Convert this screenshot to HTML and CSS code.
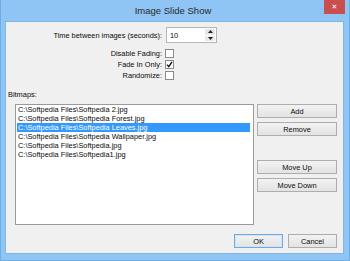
FILE: index.html
```html
<!DOCTYPE html>
<html lang="en">
<head>
    <meta charset="UTF-8">
    <title>Image Slide Show</title>
    <link rel="stylesheet" href="styles.css">
</head>
<body>
    <div class="window">
        <div class="titlebar">
            <div class="title">Image Slide Show</div>
            <div class="caption-close"><span class="caption-x">✕</span></div>
        </div>

        <div class="client">
            <div class="row spin-row">
                <span class="lbl">Time between images (seconds):</span>
                <div class="spin">
                    <span class="spin-value">10</span>
                    <div class="spin-btns">
                        <span class="spin-btn"><svg width="5" height="3" viewBox="0 0 5 3"><path d="M0 3 L2.5 0 L5 3 Z" fill="#222"/></svg></span>
                        <span class="spin-btn"><svg width="5" height="3" viewBox="0 0 5 3"><path d="M0 0 L2.5 3 L5 0 Z" fill="#222"/></svg></span>
                    </div>
                </div>
            </div>

            <div class="checks">
                <div class="row check-row">
                    <span class="lbl">Disable Fading:</span>
                    <span class="box"></span>
                </div>
                <div class="row check-row">
                    <span class="lbl">Fade In Only:</span>
                    <span class="box">
                        <svg width="7" height="7" viewBox="0 0 7 7">
                            <path d="M1 3.6 L2.8 5.6 L6 0.8" fill="none" stroke="#111" stroke-width="1.4"/>
                        </svg>
                    </span>
                </div>
                <div class="row check-row">
                    <span class="lbl">Randomize:</span>
                    <span class="box"></span>
                </div>
            </div>

            <div class="section-label">Bitmaps:</div>

            <div class="list-area">
                <ul class="list">
                    <li>C:\Softpedia Files\Softpedia 2.jpg</li>
                    <li>C:\Softpedia Files\Softpedia Forest.jpg</li>
                    <li class="selected">C:\Softpedia Files\Softpedia Leaves.jpg</li>
                    <li>C:\Softpedia Files\Softpedia Wallpaper.jpg</li>
                    <li>C:\Softpedia Files\Softpedia.jpg</li>
                    <li>C:\Softpedia Files\Softpedia1.jpg</li>
                </ul>
                <div class="side-buttons">
                    <button class="btn">Add</button>
                    <button class="btn">Remove</button>
                    <button class="btn btn-up">Move Up</button>
                    <button class="btn">Move Down</button>
                </div>
            </div>

            <div class="footer">
                <button class="btn btn-small btn-default">OK</button>
                <button class="btn btn-small">Cancel</button>
            </div>
        </div>
    </div>
</body>
</html>
```

FILE: styles.css
```css
body {
    margin: 0;
    padding: 0;
    font-family: 'Liberation Sans', Arial, sans-serif;
    font-size: 7.4px;
    color: #0a0a0a;
}

.window {
    width: 350px;
    height: 261px;
    box-sizing: border-box;
    background-color: #8fc5f4;
    border: 1px solid #6eaee6;
    border-top: none;
    display: flex;
    flex-direction: column;
}

.titlebar {
    height: 21px;
    display: grid;
    grid-template-columns: 21px 1fr 21px;
    padding: 0 4px 0 0;
}

.title {
    grid-column: 2;
    text-align: center;
    font-size: 9.5px;
    line-height: 21px;
    color: #2a2a2a;
}

.caption-close {
    grid-column: 3;
    height: 14px;
    background-color: rgb(201, 79, 79);
    color: #fff;
    font-size: 7px;
    line-height: 14px;
    text-align: center;
    font-family: 'DejaVu Sans', sans-serif;
    font-weight: bold;
}

.client {
    margin: 0 5px 6px 4px;
    flex: 1;
    background-color: #f0f0f0;
    border: 1px solid #82b6e4;
    padding: 5px 6px 5px 0;
    display: flex;
    flex-direction: column;
}

.row {
    display: flex;
    align-items: center;
}

.lbl {
    width: 156px;
    text-align: right;
    white-space: nowrap;
}

.spin-row {
    height: 16px;
    gap: 4px;
}

.spin {
    width: 51px;
    height: 16px;
    box-sizing: border-box;
    background: #fff;
    border: 1px solid #b4b6bb;
    display: flex;
    align-items: center;
    justify-content: space-between;
}

.spin-value {
    padding-left: 3px;
}

.spin-btns {
    width: 10px;
    height: 12px;
    margin-right: 1px;
    display: flex;
    flex-direction: column;
    gap: 1px;
}

.spin-btn {
    flex: 1;
    background: #e8e8e8;
    display: flex;
    justify-content: center;
    align-items: center;
}

.checks {
    margin-top: 5px;
}

.check-row {
    height: 11px;
    gap: 3px;
}

.box {
    width: 9px;
    height: 9px;
    box-sizing: border-box;
    background: #fff;
    border: 1px solid #8a8a8a;
    display: flex;
    justify-content: center;
    align-items: center;
}

.section-label {
    margin-top: 9px;
    padding-left: 2px;
    line-height: 9px;
}

.list-area {
    margin-top: 5px;
    margin-left: 9px;
    display: flex;
    gap: 3px;
}

.list {
    list-style: none;
    margin: 0;
    width: 239px;
    height: 121px;
    box-sizing: border-box;
    padding: 0 3px 0 1px;
    background: #fff;
    border: 1px solid #9a9a9a;
}

.list li {
    line-height: 9px;
    height: 9px;
    padding-left: 1px;
    white-space: nowrap;
    color: #0a0a0a;
}

.list li.selected {
    background-color: #3399ff;
    color: #fff;
}

.side-buttons {
    width: 80px;
    display: flex;
    flex-direction: column;
    gap: 4px;
}

.btn {
    height: 14px;
    padding: 0;
    font-family: inherit;
    font-size: 7.4px;
    color: #0a0a0a;
    background: linear-gradient(#f2f2f2, #e3e3e3);
    border: 1px solid #adadad;
    border-radius: 0;
}

.btn-up {
    margin-top: 20px;
}

.footer {
    margin-top: 9px;
    display: flex;
    justify-content: flex-end;
    gap: 5px;
}

.btn-small {
    width: 49px;
}

.btn-default {
    border-color: #6fa9e0;
    box-shadow: inset 0 0 0 1px #cfe6fa;
}
```
